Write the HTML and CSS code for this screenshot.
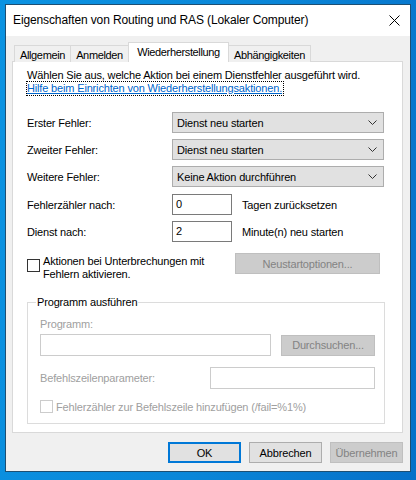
FILE: index.html
```html
<!DOCTYPE html>
<html lang="de">
<head>
<meta charset="utf-8">
<title>Eigenschaften von Routing und RAS</title>
<link rel="stylesheet" href="styles.css">
</head>
<body>
<div class="window">
  <div class="titlebar">
    <span class="title">Eigenschaften von Routing und RAS (Lokaler Computer)</span>
    <svg class="close" width="11" height="11" viewBox="0 0 11 11"><path d="M0.5 0.5 L10.5 10.5 M10.5 0.5 L0.5 10.5" stroke="#000" stroke-width="1" fill="none"/></svg>
  </div>
  <div class="content">
    <div class="tabs">
      <div class="tab tab-allg">Allgemein</div>
      <div class="tab tab-anm">Anmelden</div>
      <div class="tab tab-wied active">Wiederherstellung</div>
      <div class="tab tab-abh">Abhängigkeiten</div>
    </div>
    <div class="panel">
      <div class="intro">Wählen Sie aus, welche Aktion bei einem Dienstfehler ausgeführt wird.</div>
      <a class="help" href="#">Hilfe beim Einrichten von Wiederherstellungsaktionen.</a>

      <div class="form">
        <div class="label">Erster Fehler:</div>
        <div class="select"><span>Dienst neu starten</span><svg width="9" height="5" viewBox="0 0 9 5"><path d="M0.5 0.5 L4.5 4.5 L8.5 0.5" stroke="#333" fill="none"/></svg></div>
        <div class="label">Zweiter Fehler:</div>
        <div class="select"><span>Dienst neu starten</span><svg width="9" height="5" viewBox="0 0 9 5"><path d="M0.5 0.5 L4.5 4.5 L8.5 0.5" stroke="#333" fill="none"/></svg></div>
        <div class="label">Weitere Fehler:</div>
        <div class="select"><span>Keine Aktion durchführen</span><svg width="9" height="5" viewBox="0 0 9 5"><path d="M0.5 0.5 L4.5 4.5 L8.5 0.5" stroke="#333" fill="none"/></svg></div>
      </div>

      <div class="form form-num">
        <div class="label">Fehlerzähler nach:</div>
        <div class="num-row"><div class="input num">0</div><span>Tagen zurücksetzen</span></div>
        <div class="label">Dienst nach:</div>
        <div class="num-row"><div class="input num">2</div><span>Minute(n) neu starten</span></div>
      </div>

      <div class="check-row">
        <div class="check">
          <span class="box"></span>
          <span class="check-label">Aktionen bei Unterbrechungen mit<br>Fehlern aktivieren.</span>
        </div>
        <div class="button disabled restart">Neustartoptionen...</div>
      </div>

      <div class="group">
        <div class="group-title">Programm ausführen</div>
        <div class="dim prog-label">Programm:</div>
        <div class="prog-row">
          <div class="input disabled-input prog-input"></div>
          <div class="button disabled browse">Durchsuchen...</div>
        </div>
        <div class="param-row">
          <span class="dim">Befehlszeilenparameter:</span>
          <div class="input disabled-input param-input"></div>
        </div>
        <div class="check dim-check">
          <span class="box box-dim"></span>
          <span class="dim">Fehlerzähler zur Befehlszeile hinzufügen (/fail=%1%)</span>
        </div>
      </div>
    </div>
    <div class="buttons">
      <div class="button default">OK</div>
      <div class="button">Abbrechen</div>
      <div class="button disabled">Übernehmen</div>
    </div>
  </div>
</div>
</body>
</html>
```
FILE: styles.css
```css
html, body {
  margin: 0;
  padding: 0;
}

body {
  width: 416px;
  height: 480px;
  overflow: hidden;
  background: linear-gradient(100deg, #0b93e2 0%, #0a86d8 55%, #0670c8 100%);
  font-family: "Liberation Sans", Arial, sans-serif;
  font-size: 11px;
  letter-spacing: -0.16px;
  color: #000;
  padding-top: 4px;
  padding-left: 5px;
  box-sizing: border-box;
}

.window {
  width: 406px;
  height: 468px;
  box-sizing: border-box;
  border: 1px solid #1d4f73;
  background: #f0f0f0;
  display: flex;
  flex-direction: column;
}

.titlebar {
  height: 31px;
  background: #fff;
  display: flex;
  align-items: center;
  justify-content: space-between;
  padding: 0 10px 0 7px;
  flex: none;
}

.title {
  font-size: 12px;
  letter-spacing: -0.12px;
  padding-bottom: 1px;
}

.close {
  display: block;
}

.content {
  padding: 7px 0 0 6px;
  display: flex;
  flex-direction: column;
}

/* tab strip */
.tabs {
  display: flex;
  align-items: flex-end;
  padding-left: 2px;
  height: 19px;
  position: relative;
  z-index: 1;
  margin-bottom: -1px;
}

.tab {
  height: 17px;
  box-sizing: border-box;
  border: 1px solid #d9d9d9;
  border-bottom: none;
  background: #f0f0f0;
  display: flex;
  align-items: center;
  justify-content: center;
  margin-left: -1px;
  padding-top: 2px;
  letter-spacing: -0.35px;
}

.tab:first-child { margin-left: 0; }

.tab-allg { width: 57px; }
.tab-anm { width: 59px; }
.tab-wied { width: 101px; }
.tab-abh { width: 83px; }

.tab.active {
  height: 20px;
  background: #fff;
  padding-top: 1px;
  padding-bottom: 2px;
}

.panel {
  width: 391px;
  height: 372px;
  box-sizing: border-box;
  border: 1px solid #d9d9d9;
  background: #fff;
  padding: 7px 0 0 14px;
}

.intro {
  line-height: 13px;
}

.help {
  display: inline-block;
  color: #0066cc;
  text-decoration: underline;
  line-height: 13px;
  outline: 1px dotted #000;
  outline-offset: 0;
  padding-right: 1px;
}

.form {
  display: grid;
  grid-template-columns: 145px 212px;
  row-gap: 6px;
  align-items: center;
  margin-top: 17px;
}

.form-num {
  margin-top: 7px;
}

.select {
  height: 21px;
  box-sizing: border-box;
  background: #e1e1e1;
  border: 1px solid #adadad;
  display: flex;
  align-items: center;
  justify-content: space-between;
  padding: 0 6px 0 4px;
}

.select svg {
  display: block;
}

.num-row {
  display: flex;
  align-items: center;
  gap: 10px;
}

.input {
  height: 21px;
  box-sizing: border-box;
  border: 1px solid #7a7a7a;
  background: #fff;
}

.num {
  width: 60px;
  padding: 3px 0 0 3px;
}

.check-row {
  display: flex;
  justify-content: space-between;
  width: 353px;
  margin-top: 11px;
}

.check {
  display: flex;
  align-items: flex-start;
}

.box {
  width: 13px;
  height: 13px;
  box-sizing: border-box;
  border: 1px solid #333;
  background: #fff;
  margin-top: 6px;
  margin-right: 3px;
  flex: none;
}

.check-label {
  line-height: 13px;
  margin-top: 2px;
}

.button {
  height: 21px;
  box-sizing: border-box;
  background: #e1e1e1;
  border: 1px solid #adadad;
  display: flex;
  align-items: center;
  justify-content: center;
}

.button.disabled {
  background: #cccccc;
  border-color: #bfbfbf;
  color: #838383;
}

.restart {
  width: 145px;
}

/* group box */
.group {
  position: relative;
  width: 358px;
  height: 122px;
  box-sizing: border-box;
  border: 1px solid #dcdcdc;
  margin-top: 21px;
  padding: 15px 0 0 12px;
}

.group-title {
  position: absolute;
  top: -7px;
  left: 8px;
  background: #fff;
  padding: 0 1px;
  line-height: 13px;
}

.dim {
  color: #a0a0a0;
}

.prog-label {
  line-height: 13px;
}

.prog-row {
  display: flex;
  align-items: center;
  gap: 10px;
  margin-top: 3px;
}

.disabled-input {
  border-color: #cccccc;
}

.prog-input {
  width: 231px;
  height: 22px;
}

.browse {
  width: 94px;
}

.param-row {
  display: flex;
  align-items: center;
  justify-content: space-between;
  width: 335px;
  margin-top: 11px;
}

.param-input {
  width: 165px;
  height: 22px;
}

.dim-check {
  align-items: center;
  margin-top: 11px;
}

.box-dim {
  border-color: #cccccc;
  margin-top: 0;
}

/* dialog buttons */
.buttons {
  display: flex;
  justify-content: flex-end;
  gap: 8px;
  padding-right: 7px;
  margin-top: 9px;
}

.buttons .button {
  width: 73px;
}

.button.default {
  border: 2px solid #0078d7;
}
```
